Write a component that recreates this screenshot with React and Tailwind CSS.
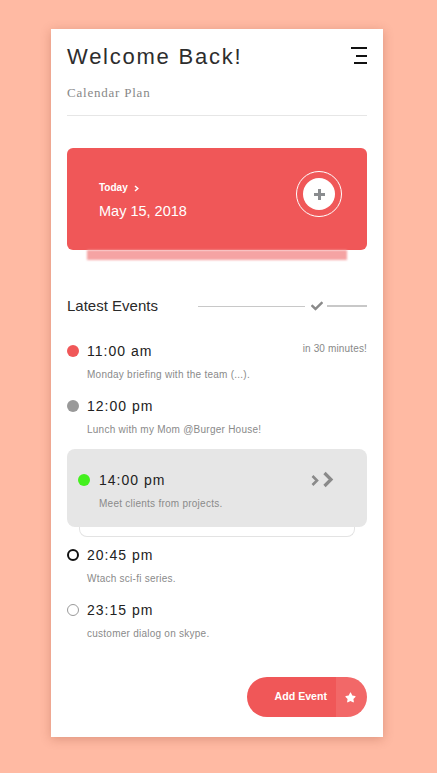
import React from "react";
import { FaCheck, FaStar } from "react-icons/fa";

function Dot({ kind }) {
  if (kind === "red") return <span className="block w-3 h-3 rounded-full bg-[#f05758] shrink-0" />;
  if (kind === "gray") return <span className="block w-3 h-3 rounded-full bg-[#999999] shrink-0" />;
  if (kind === "green") return <span className="block w-3 h-3 rounded-full bg-[#44f01e] shrink-0" />;
  if (kind === "black") return <span className="block w-3 h-3 rounded-full border-2 border-[#111111] shrink-0" />;
  return <span className="block w-3 h-3 rounded-full border border-[#9a9a9a] shrink-0" />;
}

function Event({ dot, time, desc, note, className = "" }) {
  return (
    <div className={className}>
      <div className="flex items-center h-5">
        <Dot kind={dot} />
        <span className="ml-2 text-[14px] leading-5 tracking-[1px] text-[#222222]">{time}</span>
        {note && (
          <span className="ml-auto -mt-1 text-[10px] leading-[14px] tracking-[0.15px] text-[#888888]">{note}</span>
        )}
      </div>
      <div className="mt-[7px] pl-5 text-[10px] leading-[14px] tracking-[0.25px] text-[#8a8a8a]">{desc}</div>
    </div>
  );
}

export default function App() {
  return (
    <div className="min-h-[773px] w-[437px] bg-[#ffbaa3] pt-[29px] pl-[51px]" style={{ fontFamily: "'Liberation Sans', Arial, sans-serif" }}>
      <div className="w-[332px] h-[708px] bg-white shadow-[0_2px_10px_rgba(120,40,20,0.25)] px-4 pt-[15px] flex flex-col">
        {/* Header */}
        <div className="flex items-start justify-between">
          <h1 className="text-[22px] leading-[26px] tracking-[0.08em] text-[#2d2d2d] font-normal">Welcome Back!</h1>
          <div className="mt-[3px] flex flex-col items-end w-4">
            <span className="block h-[2px] w-4 bg-[#111111]" />
            <span className="block h-[2px] w-[11px] bg-[#111111] mt-[5.5px]" />
            <span className="block h-[2px] w-[13px] bg-[#111111] mt-[5.5px]" />
          </div>
        </div>
        <div className="mt-[15px] text-[13px] leading-4 tracking-[0.06em] text-[#888888]" style={{ fontFamily: "'Liberation Serif', 'Times New Roman', serif" }}>
          Calendar Plan
        </div>
        <div className="mt-[14px] h-px bg-[#e6e6e6]" />

        {/* Today card */}
        <div className="mt-8 h-[102px] rounded-md bg-[#f05758] flex justify-between pl-8 pr-[25px]">
          <div className="pt-[33px] text-white">
            <div className="flex items-center text-[10px] font-bold leading-[14px]">
              Today
              <svg width="5" height="7" viewBox="0 0 5 7" className="ml-[6px]">
                <polyline points="1,1 3.8,3.5 1,6" fill="none" stroke="white" strokeWidth="1.5" />
              </svg>
            </div>
            <div className="mt-[7px] text-[14.5px] leading-[18px]">May 15, 2018</div>
          </div>
          <div className="mt-[23px] w-[46px] h-[46px] rounded-full border border-white flex items-center justify-center">
            <div className="w-8 h-8 rounded-full bg-white flex items-center justify-center">
              <svg width="11" height="11" viewBox="0 0 11 11">
                <rect x="4" y="0" width="3" height="11" fill="#8a8c8f" />
                <rect x="0" y="4" width="11" height="3" fill="#8a8c8f" />
              </svg>
            </div>
          </div>
        </div>
        <div className="mx-5 h-[10px] bg-[#f5a3a3] blur-[1px]" />

        {/* Latest events header */}
        <div className="mt-[36px] flex items-center h-5">
          <span className="text-[15px] leading-5 text-[#2a2a2a]">Latest Events</span>
          <span className="ml-10 flex-1 h-px bg-[#c8c8c8]" />
          <FaCheck className="ml-[6px] text-[#8a8a8a]" size={12} />
          <span className="ml-1 w-10 h-[2px] bg-[#c8c8c8]" />
        </div>

        {/* Events */}
        <Event className="mt-[25px]" dot="red" time="11:00 am" desc="Monday briefing with the team (...)." note="in 30 minutes!" />
        <Event className="mt-[14px]" dot="gray" time="12:00 pm" desc="Lunch with my Mom @Burger House!" />

        <div className="mt-[12px]">
          <div className="rounded-lg bg-[#e6e6e6] pt-[21px] pb-4 pl-[11px] pr-[32px]">
            <div className="flex items-center h-5">
              <Dot kind="green" />
              <span className="ml-[9px] text-[14px] leading-5 tracking-[1px] text-[#222222]">14:00 pm</span>
              <svg width="25" height="18" viewBox="0 0 25 18" className="ml-auto">
                <polyline points="2.5,5 7,9.5 2.5,14" fill="none" stroke="#8a8a8a" strokeWidth="2.6" />
                <polyline points="14.5,2 21,8.5 14.5,15" fill="none" stroke="#8a8a8a" strokeWidth="3.2" />
              </svg>
            </div>
            <div className="mt-[7px] pl-[21px] text-[10px] leading-[14px] tracking-[0.25px] text-[#8a8a8a]">Meet clients from projects.</div>
          </div>
          <div className="mx-3 h-[10px] border border-t-0 border-[#e3e3e3] rounded-b-lg" />
        </div>

        <Event className="mt-[8px]" dot="black" time="20:45 pm" desc="Wtach sci-fi series." />
        <Event className="mt-[14px]" dot="ring" time="23:15 pm" desc="customer dialog on skype." />

        {/* Button */}
        <div className="mt-[36px] self-end flex h-10 rounded-full overflow-hidden">
          <div className="bg-[#f05758] pl-7 pr-[9px] flex items-center text-white text-[10.6px] font-bold">Add Event</div>
          <div className="bg-[#f26868] w-[31px] flex items-center justify-center pr-[2px]">
            <FaStar className="text-white" size={11} />
          </div>
        </div>
      </div>
    </div>
  );
}
